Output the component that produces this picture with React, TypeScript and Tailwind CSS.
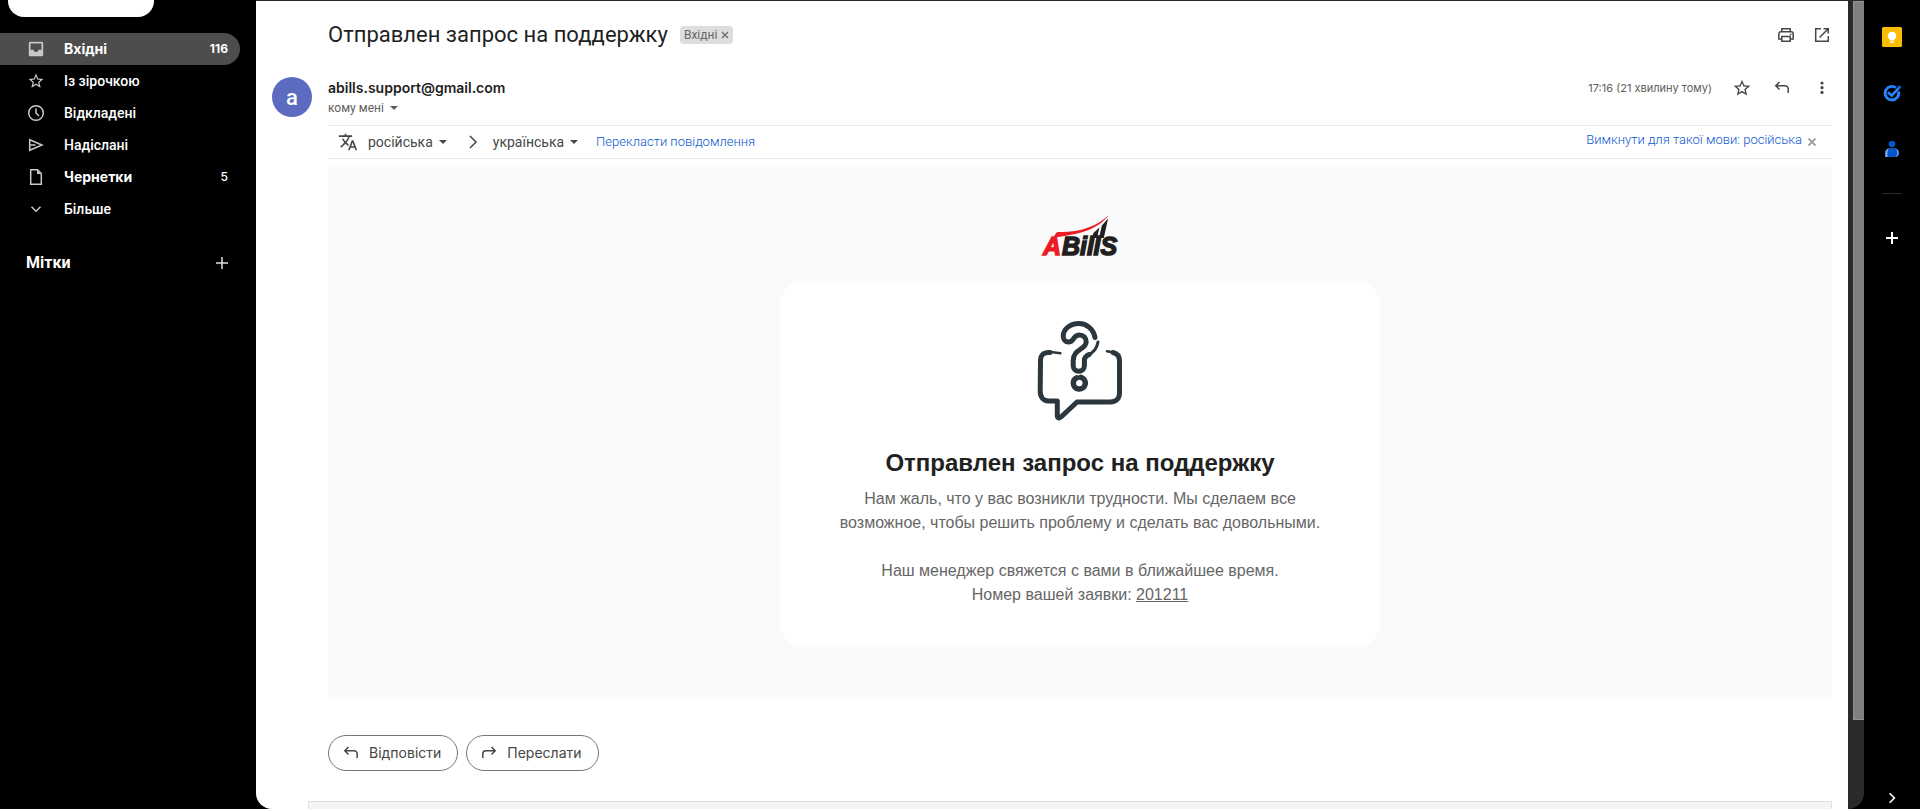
import React from "react";

const STAR =
  "M22 9.24l-7.19-.62L12 2 9.19 8.63 2 9.24l5.46 4.73L5.82 21 12 17.27 18.18 21l-1.63-7.03L22 9.24zM12 15.4l-3.76 2.27 1-4.28-3.32-2.88 4.38-.38L12 6.1l1.71 4.04 4.38.38-3.32 2.88 1 4.28L12 15.4z";

type IconProps = { className?: string };

const StarIcon = ({ className = "size-5" }: IconProps) => (
  <svg viewBox="0 0 24 24" className={className} fill="currentColor" aria-hidden="true">
    <path d={STAR} />
  </svg>
);

const InboxIcon = () => (
  <svg viewBox="0 0 20 20" className="size-5" fill="currentColor" aria-hidden="true">
    <path
      fillRule="evenodd"
      d="M4.500 2.800h11A1.500 1.500 0 0 1 17.200 4.300v11.400a1.500 1.500 0 0 1-1.500 1.500h-11A1.500 1.500 0 0 1 2.800 15.700v-11.400A1.500 1.500 0 0 1 4.500 2.800zM4.500 4.500v6.300H7.500a2.500 2.200 0 0 0 5 0h3v-6.300z"
    />
  </svg>
);

const ClockIcon = () => (
  <svg viewBox="0 0 20 20" className="size-5" fill="none" stroke="currentColor" strokeWidth="1.5" aria-hidden="true">
    <circle cx="10" cy="10" r="7.3" />
    <path d="M10 5.500V10l3 3" />
  </svg>
);

const SendIcon = () => (
  <svg viewBox="0 0 20 20" className="size-5" fill="none" stroke="currentColor" strokeWidth="1.5" aria-hidden="true">
    <path d="M3.700 4.700L16 10 3.700 15.300zM3.700 10H9.500" />
  </svg>
);

const FileIcon = () => (
  <svg viewBox="0 0 20 20" className="size-5" fill="none" stroke="currentColor" strokeWidth="1.5" aria-hidden="true">
    <path d="M4.700 2.700h6.800l3.800 3.800v10.800H4.700z" />
    <path d="M11 3v4h4z" fill="currentColor" stroke="none" />
  </svg>
);

const ChevronDown = () => (
  <svg viewBox="0 0 20 20" className="size-5" fill="none" stroke="currentColor" strokeWidth="1.5" aria-hidden="true">
    <path d="M5.500 7.800L10 12.200l4.500-4.400" />
  </svg>
);

const ChevronRight = ({ className = "size-5" }: IconProps) => (
  <svg viewBox="0 0 20 20" className={className} fill="none" stroke="currentColor" strokeWidth="2" aria-hidden="true">
    <path d="M7 4l6 6-6 6" />
  </svg>
);

const PlusIcon = ({ className = "size-5" }: IconProps) => (
  <svg viewBox="0 0 20 20" className={className} fill="none" stroke="currentColor" aria-hidden="true">
    <path d="M10 4v12M4 10h12" />
  </svg>
);

const CaretIcon = () => (
  <svg viewBox="0 0 8 4" className="h-1 w-2" fill="currentColor" aria-hidden="true">
    <path d="M0 0h8L4 4z" />
  </svg>
);

const PrintIcon = () => (
  <svg viewBox="0 0 20 20" className="size-5" fill="none" stroke="currentColor" strokeWidth="1.5" aria-hidden="true">
    <path d="M5.800 6.700V3.700h8.400v3M5.600 14H2.800V9c0-1.300.9-2.200 2.200-2.200h10c1.300 0 2.200.9 2.200 2.200v5h-2.800" />
    <path d="M5.800 11.500h8.400v4.800H5.800z" />
    <circle cx="14.700" cy="9.300" r=".9" fill="currentColor" stroke="none" />
  </svg>
);

const OpenIcon = () => (
  <svg viewBox="0 0 20 20" className="size-5" fill="none" stroke="currentColor" strokeWidth="1.500" aria-hidden="true">
    <path d="M9 3.700H3.700v12.600h12.600V11M11.500 3.700h4.800v4.800M16.300 3.700L7.500 12.500" />
  </svg>
);

const ReplyIcon = () => (
  <svg viewBox="0 0 20 20" className="size-5" fill="none" stroke="currentColor" strokeWidth="1.500" aria-hidden="true">
    <path d="M7.500 4L3.800 7.800l3.700 3.700M3.800 7.800h9.400a3 3 0 0 1 3 3V15" />
  </svg>
);

const ForwardIcon = () => (
  <svg viewBox="0 0 20 20" className="size-5" fill="none" stroke="currentColor" strokeWidth="1.500" aria-hidden="true">
    <path d="M12.500 4l3.700 3.800-3.700 3.700M16.200 7.800H6.800a3 3 0 0 0-3 3V15" />
  </svg>
);

const MoreIcon = () => (
  <svg viewBox="0 0 20 20" className="size-5" fill="currentColor" aria-hidden="true">
    <circle cx="10" cy="5" r="1.600" />
    <circle cx="10" cy="9.700" r="1.600" />
    <circle cx="10" cy="14.400" r="1.600" />
  </svg>
);

const TranslateIcon = () => (
  <svg viewBox="0 0 24 24" className="size-5" fill="currentColor" aria-hidden="true">
    <path d="M12.870 15.070l-2.540-2.510.03-.03c1.740-1.940 2.980-4.170 3.710-6.530H17V4h-7V2H8v2H1v1.990h11.170C11.500 7.920 10.440 9.750 9 11.350 8.070 10.320 7.300 9.190 6.690 8h-2c.73 1.630 1.730 3.170 2.980 4.560l-5.090 5.020L4 19l5-5 3.110 3.110.76-2.040zM18.500 10h-2L12 22h2l1.120-3h4.750L21 22h2l-4.500-12zm-2.620 7l1.620-4.330L19.120 17h-3.240z" />
  </svg>
);

const KeepIcon = () => (
  <svg viewBox="0 0 20 20" className="size-5" aria-hidden="true">
    <rect width="20" height="20" rx="1.500" fill="#fbbc04" />
    <path fill="#fff" d="M10 4.800a4.200 4.200 0 0 0-2.200 7.800V13.600h4.400v-1a4.200 4.200 0 0 0-2.200-7.800zM7.800 14.400h4.400v1.300H7.800z" />
  </svg>
);

const TasksIcon = () => (
  <svg viewBox="0 0 20 20" className="size-5" fill="none" stroke="#2684fc" aria-hidden="true">
    <path strokeWidth="2.800" d="M13.800 4.600A6.800 6.800 0 1 0 16.500 8.500" />
    <path strokeWidth="2.600" d="M6 9.200l3.600 3.400 7.600-8" />
    <circle cx="17.300" cy="4.200" r="1.700" fill="#0066da" stroke="none" />
  </svg>
);

const ContactsIcon = () => (
  <svg viewBox="0 0 20 20" className="size-5" aria-hidden="true">
    <circle cx="10" cy="5" r="3.300" fill="#0057cc" />
    <path fill="#7baaf7" d="M3.200 18v-4a4.400 4.400 0 0 1 4.300-4.400h5a4.400 4.400 0 0 1 4.300 4.400c0 2.400-1.300 4-3.300 4z" />
    <path fill="#0057cc" d="M5.500 18v-3c0-3 .5-5.400 2.800-5.400h4c2.300 0 3 2 3 4.400 0 2.400-1 4-3 4z" />
  </svg>
);

const BrandLogo = () => (
  <svg viewBox="0 0 86 50" className="h-[50px] w-[86px]" role="img" aria-label="ABillS">
    <g fontFamily="Liberation Sans, Arial, sans-serif" fontWeight="700" fontStyle="italic" fontSize="25">
      <text x="6" y="45" fill="#ed1c24" stroke="#ed1c24" strokeWidth="1.400">A</text>
      <text x="25 43 50 56.500 63.500" y="45" fill="#231f20" stroke="#231f20" strokeWidth="1.500">BillS</text>
    </g>
    <path fill="#231f20" d="M55.200 28l1.200-5 6-5.500-2.300 10.500zM62 28l2.900-12.500 6.200-7L66.800 28z" />
    <path fill="#ed1c24" d="M17 27.500c1-3.500 2-5.500 5-5.500 20 .5 37-5 50-17-12 15-30 19.500-55 22.500z" />
  </svg>
);

const QuestionIcon = () => (
  <svg viewBox="0 0 120 120" className="size-[120px]" fill="none" stroke="#2b363d" strokeLinecap="round" strokeLinejoin="round" aria-hidden="true">
    <path strokeWidth="5" d="M30 42.500c-7-.6-9.500 3.500-9.500 7.500l-.3 31c0 6 3 10 8.300 10h8.800v14.500c0 2.500 2 3.200 4 1.300L57 92h33.500c6 0 9-4 9-9V51c0-4-2-7.500-6.500-8.500" />
    <path strokeWidth="2.500" d="M29 41.700l11.500 1.500M87 41.200l7 1.200" />
    <path strokeWidth="5" d="M75 27.500C73.500 19 66.500 13.500 59 13.500c-8.500 0-15.800 5.500-15.800 12.500 0 3.500 2.200 6 5.300 6 3.300 0 4.300-2.200 5.700-4.200 1.400-1.800 3-2.800 5.200-2.800 4.200 0 6.800 3 6.800 7 0 7.500-13 7-13 18.500v5c0 3.500 2.500 5.800 5.500 5.800s5.700-2.300 5.700-5.800V50c0-3 2-4.200 4.600-5.500" />
    <path strokeWidth="3" d="M66.500 46c6-2.500 10.500-7.500 11.500-14" />
    <path strokeWidth="5.500" d="M57 67.800c-2.500 1-3.700 3-3.700 5.200a6 6 0 1 0 7.700-5.700" />
  </svg>
);

const NAV = [
  { label: "Вхідні", count: "116", icon: <InboxIcon />, bold: true, active: true },
  { label: "Із зірочкою", count: "", icon: <StarIcon className="size-[18px]" />, bold: false, active: false },
  { label: "Відкладені", count: "", icon: <ClockIcon />, bold: false, active: false },
  { label: "Надіслані", count: "", icon: <SendIcon />, bold: false, active: false },
  { label: "Чернетки", count: "5", icon: <FileIcon />, bold: true, active: false },
  { label: "Більше", count: "", icon: <ChevronDown />, bold: false, active: false },
];

function Sidebar() {
  return (
    <aside className="flex w-64 shrink-0 flex-col text-white">
      <button aria-label="Написати" className="ml-2 h-[17px] w-[146px] rounded-b-2xl bg-white" />
      <nav className="mt-4 flex flex-col pr-4">
        {NAV.map((n) => (
          <a
            key={n.label}
            href="#"
            className={`flex h-8 items-center rounded-r-full pr-3 pl-[26px] text-sm ${n.active ? "bg-[#4d4d4d]" : ""} ${
              n.bold ? "font-['Inter',sans-serif] font-bold" : "font-medium"
            }`}
          >
            <span className="flex w-5 justify-center text-[#c8c8c8]">{n.icon}</span>
            <span className="ml-[18px] flex-1">{n.label}</span>
            <span className={`text-xs ${n.active ? "font-bold" : "font-medium"}`}>{n.count}</span>
          </a>
        ))}
      </nav>
      <div className="mt-[26px] flex items-center justify-between pr-6 pl-[26px]">
        <h2 className="text-base font-bold">Мітки</h2>
        <button aria-label="Створити мітку" className="text-[#e0e0e0]">
          <PlusIcon className="size-5 stroke-[1.5]" />
        </button>
      </div>
    </aside>
  );
}

function SidePanel() {
  return (
    <aside className="flex w-14 shrink-0 flex-col items-center pt-[27px] pb-[3px] text-white">
      <button aria-label="Keep"><KeepIcon /></button>
      <button aria-label="Завдання" className="mt-9"><TasksIcon /></button>
      <button aria-label="Контакти" className="mt-9"><ContactsIcon /></button>
      <div className="mt-[34px] h-px w-5 bg-[#2a2a2a]" />
      <button aria-label="Установити доповнення" className="mt-[34px]"><PlusIcon className="size-5 stroke-2" /></button>
      <button aria-label="Сховати панель" className="mt-auto"><ChevronRight className="size-4" /></button>
    </aside>
  );
}

function Notice() {
  return (
    <section className="mt-2 flex flex-col items-center bg-[#fafafa] pt-[43px] pb-[50px] font-['Liberation_Sans',Arial,sans-serif]">
      <BrandLogo />
      <div className="mt-[21px] flex w-full max-w-[600px] flex-col items-center rounded-3xl bg-white px-10 pt-[29px] pb-10 text-center">
        <QuestionIcon />
        <h2 className="mt-[19px] text-2xl leading-7 font-bold text-[#212121]">Отправлен запрос на поддержку</h2>
        <p className="mt-[10px] text-base leading-6 text-[#666]">
          Нам жаль, что у вас возникли трудности. Мы сделаем все
          <br />
          возможное, чтобы решить проблему и сделать вас довольными.
          <br />
          <br />
          Наш менеджер свяжется с вами в ближайшее время.
          <br />
          Номер вашей заявки: <a href="#" className="underline">201211</a>
        </p>
      </div>
    </section>
  );
}

const PILL = "flex h-9 items-center gap-2 rounded-full border border-[#747775] pr-4 pl-3 font-['Inter',sans-serif] text-sm text-[#444746]";

export default function App() {
  return (
    <div className="flex h-screen overflow-hidden bg-black font-['Roboto',sans-serif]">
      <Sidebar />
      <div className="flex min-w-0 flex-1 overflow-hidden rounded-b-2xl border-t border-[#2a2a2a] bg-[#2a2a2a]">
        <main className="flex min-w-0 flex-1 flex-col overflow-hidden bg-white pr-4 pl-4">
          <header className="flex items-center pt-5 pl-14">
            <h1 className="text-[22px] leading-7 text-[#1f1f1f]">Отправлен запрос на поддержку</h1>
            <span className="ml-3 flex h-[18px] items-center gap-1 rounded bg-[#ddd] px-1 text-xs text-[#666]">
              Вхідні
              <button aria-label="Вилучити мітку">
                <svg viewBox="0 0 8 8" className="size-2" stroke="currentColor" strokeWidth="1.200" aria-hidden="true">
                  <path d="M1 1l6 6M7 1L1 7" />
                </svg>
              </button>
            </span>
            <div className="ml-auto flex gap-4 text-[#444746]">
              <button aria-label="Друкувати"><PrintIcon /></button>
              <button aria-label="Відкрити в новому вікні"><OpenIcon /></button>
            </div>
          </header>

          <div className="mt-[27px] flex gap-4">
            <div className="mt-px flex size-10 shrink-0 items-center justify-center rounded-full bg-[#5c6bc0] text-[22px] font-medium text-white">a</div>
            <div className="min-w-0 flex-1">
              <div className="flex h-6 items-center">
                <h3 className="font-['Inter',sans-serif] text-sm font-semibold text-[#1f1f1f]">abills.support@gmail.com</h3>
                <time className="ml-auto font-['Inter',sans-serif] text-[11px] text-[#5e5e5e]">17:16 (21 хвилину тому)</time>
                <div className="ml-5 flex gap-5 text-[#444746]">
                  <button aria-label="Позначити зірочкою"><StarIcon className="size-5" /></button>
                  <button aria-label="Відповісти"><ReplyIcon /></button>
                  <button aria-label="Більше"><MoreIcon /></button>
                </div>
              </div>
              <button className="flex h-4 items-center gap-[6px] text-xs text-[#5e5e5e]">
                кому мені <CaretIcon />
              </button>
              <div className="mt-[9px] flex h-[34px] items-center border-y border-[#ebebeb] pr-4 pl-[10px] text-sm text-[#444746]">
                <TranslateIcon />
                <button className="ml-[10px] flex items-center gap-[6px]">російська <CaretIcon /></button>
                <ChevronRight className="mr-[10px] ml-4 size-5 stroke-[1.5]" />
                <button className="flex items-center gap-[6px]">українська <CaretIcon /></button>
                <a href="#" className="ml-[18px] text-[13px] font-light text-[#0b57d0]">Перекласти повідомлення</a>
                <a href="#" className="mb-1 ml-auto text-[13px] font-light text-[#0b57d0]">Вимкнути для такої мови: російська</a>
                <button aria-label="Закрити" className="ml-[6px] text-[#999]">
                  <svg viewBox="0 0 8 8" className="size-2" stroke="currentColor" strokeWidth="1.800" aria-hidden="true">
                    <path d="M.5.5l7 7M7.500.5l-7 7" />
                  </svg>
                </button>
              </div>
              <Notice />
              <div className="mt-[38px] flex gap-2">
                <button className={PILL}><ReplyIcon /> Відповісти</button>
                <button className={PILL}><ForwardIcon /> Переслати</button>
              </div>
            </div>
          </div>
          <div className="mt-[30px] ml-9 h-10 shrink-0 border border-[#e0e0e0] bg-[#f4f4f4]" />
        </main>
        <div className="flex w-4 shrink-0 justify-end" aria-hidden="true">
          <div className="h-[89%] w-[11px] border border-r-0 border-[#929292] bg-[#808080]" />
        </div>
      </div>
      <SidePanel />
    </div>
  );
}
